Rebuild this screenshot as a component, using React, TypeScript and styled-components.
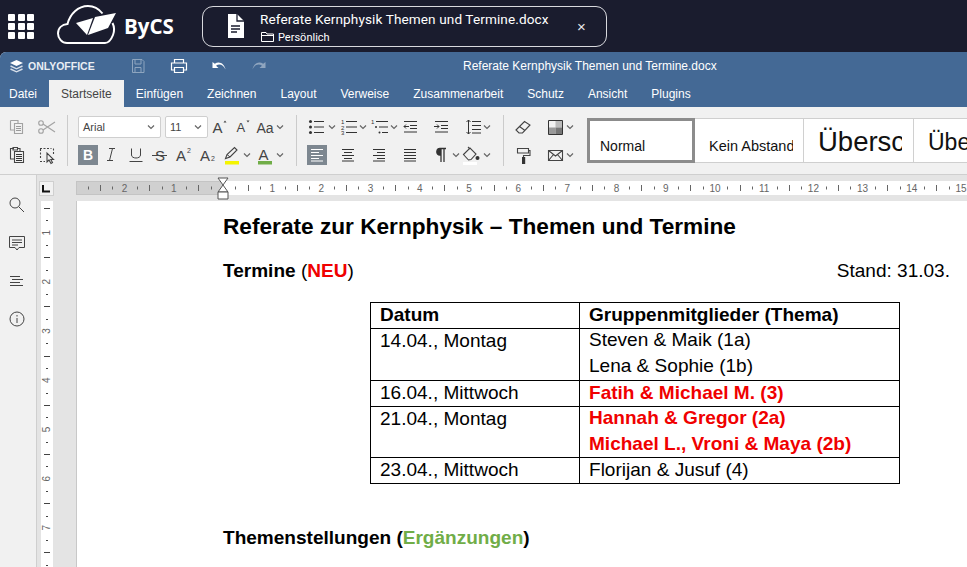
import React from "react";
import styled, { createGlobalStyle } from "styled-components";

const Global = createGlobalStyle`
  html, body { margin: 0; padding: 0; width: 967px; height: 567px; overflow: hidden; background: #fff; }
  body { font-family: "Liberation Sans", Arial, sans-serif; color: #000; }
  #root { width: 967px; height: 567px; overflow: hidden; }
`;

const Shell = styled.div`
  width: 967px; height: 567px; display: flex; flex-direction: column; background: #1a1c2e; overflow: hidden;
`;
const TopBar = styled.header`
  height: 52px; flex: none; display: flex; align-items: center; padding-left: 8px; color: #fff;
`;
const AppsGrid = styled.div`
  width: 26px; height: 25px; display: grid; grid-template-columns: repeat(3, 7px); grid-auto-rows: 7px; gap: 2px 2.5px;
  span { background: #fff; border-radius: 1px; }
`;
const LogoWrap = styled.div`
  margin-left: 23px; width: 117px; display: flex; align-items: center;
`;
const LogoText = styled.span`
  font-family: "Open Sans", sans-serif; font-weight: 700; font-size: 20.5px; margin-left: 5px; letter-spacing: 0;
`;
const FilePill = styled.div`
  margin-left: 28px; width: 405px; height: 41px; box-sizing: border-box; border: 1px solid #d8d9de; border-radius: 11px;
  display: flex; align-items: center; padding-left: 24px;
`;
const FileText = styled.div`
  margin-left: 16px; width: 317px; padding-top: 2px; display: flex; flex-direction: column; font-family: Roboto, sans-serif;
`;
const FileName = styled.div` font-size: 13.6px; line-height: 18px; letter-spacing: 0.1px; white-space: nowrap; `;
const FileLoc = styled.div`
  font-size: 11px; line-height: 15px; margin-top: 2px; display: flex; align-items: center; gap: 4px; padding-left: 1px;
`;
const Close = styled.div` font-size: 15px; line-height: 17px; font-family: "Liberation Sans", sans-serif; font-weight: 400; color: #e8e8ec; `;

const Editor = styled.div`
  flex: 1; min-height: 0; display: flex; flex-direction: column; background: #f1f1f1; border-radius: 6px 0 0 0; overflow: hidden;
`;
const TitleBar = styled.div`
  height: 28px; flex: none; background: #446995; color: #fff; display: flex; align-items: center; padding-left: 9px;
`;
const Brand = styled.div`
  display: flex; align-items: center; gap: 4px; font-size: 10.5px; font-weight: 700; width: 120px; color: #e9eef4;
`;
const HeadIcon = styled.div<{ $w: number; $dim?: boolean; $ml?: number }>`
  width: ${p => p.$w}px; margin-left: ${p => p.$ml ?? 0}px; display: flex; justify-content: center; opacity: ${p => (p.$dim ? 0.4 : 1)};
`;
const DocTitle = styled.div` font-size: 12px; margin-left: 195px; white-space: nowrap; `;
const Tabs = styled.nav`
  height: 27px; flex: none; background: #446995; display: flex; padding-left: 9px; color: #fff; font-size: 12px;
`;
const Tab = styled.div<{ $active?: boolean; $first?: boolean }>`
  padding: 0 12px; padding-left: ${p => (p.$first ? 0 : 12)}px; line-height: 28px;
  background: ${p => (p.$active ? "#f1f1f1" : "transparent")}; color: ${p => (p.$active ? "#444" : "#fff")};
`;
const Toolbar = styled.div`
  height: 68px; flex: none; background: #f1f1f1; border-bottom: 1px solid #cfcfcf; box-sizing: border-box; display: flex; overflow: hidden;
`;
const Group = styled.div<{ $w: number; $pl: number; $line?: boolean }>`
  flex: none; width: ${p => p.$w}px; box-sizing: border-box; padding-left: ${p => p.$pl}px; height: 51px; margin-top: 8px;
  border-right: ${p => (p.$line ? "1px solid #cbcbcb" : "0")}; display: flex; flex-direction: column; justify-content: space-between;
`;
const ToolRow = styled.div` display: flex; height: 22px; align-items: center; margin-top: 1px; `;
const Tool = styled.div<{ $w?: number; $ml?: number; $on?: boolean; $dim?: boolean }>`
  flex: none; width: ${p => p.$w ?? 20}px; height: 20px; margin-left: ${p => p.$ml ?? 0}px; display: flex; align-items: center; justify-content: center;
  background: ${p => (p.$on ? "#7d8790" : "transparent")}; color: ${p => (p.$on ? "#fff" : "#444")}; opacity: ${p => (p.$dim ? 0.45 : 1)};
`;
const Combo = styled.div<{ $w: number; $ml?: number }>`
  flex: none; width: ${p => p.$w}px; margin-left: ${p => p.$ml ?? 0}px; height: 22px; box-sizing: border-box; background: #fff; border: 1px solid #cfcfcf; border-radius: 2px;
  display: flex; align-items: center; justify-content: space-between; padding: 0 4px; font-size: 11px; color: #444;
`;
const Gallery = styled.div`
  margin: 11px 0 0 0; height: 45px; display: flex; flex: none; background: #fff; border-top: 1px solid #cfcfcf; border-bottom: 1px solid #cfcfcf; box-sizing: border-box;
`;
const StyleCell = styled.div<{ $w: number; $sel?: boolean; $size: number; $pl: number; $pb: number; $lh: number }>`
  flex: none; width: ${p => p.$w}px; box-sizing: border-box; overflow: hidden; white-space: nowrap; color: #111;
  border: ${p => (p.$sel ? "3px solid #8c8c8c" : "0")}; margin: ${p => (p.$sel ? "-1px 0" : "0")}; border-right: ${p => (p.$sel ? "3px solid #8c8c8c" : "1px solid #d0d0d0")};
  padding-left: ${p => p.$pl}px; font-size: ${p => p.$size}px; display: flex; align-items: flex-end;
  padding-bottom: ${p => p.$pb}px; line-height: ${p => p.$lh}px;
`;
const StyleClip = styled.span<{ $w: number }>` display: block; width: ${p => p.$w}px; overflow: hidden; `;
const Work = styled.div` flex: 1; min-height: 0; display: flex; `;
const SideBar = styled.aside`
  width: 37px; flex: none; box-sizing: border-box; border-right: 1px solid #cfcfcf; background: #f1f1f1; display: flex; flex-direction: column; align-items: center; padding-top: 20px; gap: 18px; padding-right: 3px;
`;
const SideIcon = styled.div` width: 20px; height: 20px; display: flex; align-items: center; justify-content: center; `;
const Stage = styled.div` flex: 1; min-width: 0; display: flex; flex-direction: column; background: #e4e4e4; `;
const RulerRow = styled.div` height: 26px; flex: none; display: flex; align-items: flex-start; `;
const CornerBox = styled.div`
  width: 15px; height: 15px; margin: 6px 0 0 2px; box-sizing: border-box; border: 1px solid #cfcfcf; background: #f1f1f1; display: flex; align-items: center; justify-content: center;
`;
const HRuler = styled.div` margin: 6px 0 0 22px; width: 891px; height: 14px; flex: none; `;
const Body = styled.div` flex: 1; min-height: 0; display: flex; `;
const VRuler = styled.div` margin-left: 4px; width: 12px; flex: none; background: #fff; overflow: hidden; `;
const Page = styled.main`
  margin-left: 23px; flex: 1; background: #fff; border-left: 1px solid #c8c8c8; padding: 11px 17px 0 146px; overflow: hidden;
`;
const DocH1 = styled.h1` margin: 0; font-size: 22.65px; line-height: 28px; font-weight: 700; white-space: nowrap; `;
const DocLine = styled.div<{ $mt: number }>`
  margin-top: ${p => p.$mt}px; display: flex; justify-content: space-between; font-size: 19.05px; line-height: 26px; white-space: nowrap;
`;
const Strong = styled.b``;
const Red = styled.b` color: #f00000; `;
const Green = styled.b` color: #70ad47; `;
const Table = styled.table`
  border-collapse: collapse; margin: 18px 0 0 147px; font-size: 19.05px; table-layout: fixed; width: 530px;
  td, th { border: 1px solid #000; padding: 0 9px 2px; line-height: 23px; text-align: left; vertical-align: top; white-space: nowrap; font-weight: 400; }
  th { font-weight: 700; padding-bottom: 1px; line-height: 24px; }
`;
const Col1 = styled.col` width: 209px; `;
const TwoLines = styled.div` line-height: 26px; margin: -2px 0 -1.5px; `;

const stroke = { fill: "none", stroke: "currentColor", strokeWidth: 1.1 } as const;
const I = ({ children, w = 20, h = 20 }: { children: React.ReactNode; w?: number; h?: number }) => (
  <svg width={w} height={h} viewBox={`0 0 ${w} ${h}`} style={{ display: "block" }}>{children}</svg>
);
const Chev = () => (
  <svg width="10" height="10" viewBox="0 0 10 10"><path d="M2 3.5 5 6.5 8 3.5" fill="none" stroke="#666" strokeWidth={1.2} /></svg>
);
const Lines = ({ x, ys, w }: { x: number[]; ys: number[]; w: number[] }) => (
  <>{ys.map((y, i) => <path key={i} d={`M${x[i % x.length]} ${y + 0.5}h${w[i % w.length]}`} stroke="#333" fill="none" />)}</>
);
const font = "Liberation Sans, sans-serif";

const hTicks: React.ReactNode[] = [];
for (let i = -12; i <= 62; i++) {
  const x = 147 + i * 12.3;
  if (x < 0 || x > 891) continue;
  const m = ((i % 4) + 4) % 4;
  if (m === 0) {
    if (i === 0) continue;
    const n = Math.abs(i / 4);
    hTicks.push(<text key={i} x={x} y={11} fontSize="10" fill="#666" textAnchor="middle" fontFamily={font}>{n}</text>);
  } else {
    hTicks.push(<line key={i} x1={Math.round(x) + 0.5} x2={Math.round(x) + 0.5} y1={m === 2 ? 4 : 5.5} y2={m === 2 ? 10 : 8.5} stroke="#666" />);
  }
}
const vTicks: React.ReactNode[] = [];
for (let i = 0; i < 30; i++) {
  const y = 7 + i * 12.3;
  const m = i % 4;
  if (m === 2) {
    vTicks.push(<text key={i} x={0} y={0} fontSize="10" fill="#666" textAnchor="middle" fontFamily={font} transform={`translate(9 ${y}) rotate(-90)`}>{(i + 2) / 4}</text>);
  } else {
    vTicks.push(<line key={i} x1={m === 0 ? 3 : 5} x2={m === 0 ? 9 : 7} y1={Math.round(y) + 0.5} y2={Math.round(y) + 0.5} stroke="#444" />);
  }
}

export default function App() {
  return (
    <Shell>
      <Global />
      <TopBar>
        <AppsGrid>{Array.from({ length: 9 }).map((_, i) => <span key={i} />)}</AppsGrid>
        <LogoWrap>
          <svg width="62" height="42" viewBox="57 5 62 42" style={{ flex: "none" }}>
            <path d="M105 43H67C62 43 58 38.500 58 33.500C58 28 62 24.500 67.500 24C70 14 78 6 88 6C94 6 99 9 102.500 13.500M112.500 23C114.500 27 114.500 31 113 35C111 40 108 43 105 43" fill="none" stroke="#fff" strokeWidth="2" />
            <path d="M76 23 93 18 87 35Z" fill="#fff" />
            <path d="M95 17 116 13 108 28 88 35Z" fill="#fff" />
          </svg>
          <LogoText>ByCS</LogoText>
        </LogoWrap>
        <FilePill>
          <svg width="17" height="24" viewBox="0 0 17 24">
            <path d="M1 0H10L17 7V24H1Z" fill="#fff" />
            <path d="M10 0V7H17" fill="none" stroke="#1a1c2e" strokeWidth="1.300" />
            <path d="M4 12h9M4 15h9M4 18h6" stroke="#1a1c2e" strokeWidth="1.300" />
          </svg>
          <FileText>
            <FileName>Referate Kernphysik Themen und Termine.docx</FileName>
            <FileLoc>
              <svg width="13" height="12" viewBox="0 0 13 12"><path d="M.5 10.500V1.500H5L6 3h6.500v7.500ZM.5 4.500h12" fill="none" stroke="#fff" /></svg>
              Persönlich
            </FileLoc>
          </FileText>
          <Close>×</Close>
        </FilePill>
      </TopBar>
      <Editor>
        <TitleBar>
          <Brand>
            <svg width="15" height="15" viewBox="0 0 15 15">
              <path d="M7.500 1 14 4 7.500 7 1 4Z" fill="#fff" />
              <path d="M1.500 7 7.500 9.800 13.500 7M1.500 10 7.500 12.800 13.500 10" fill="none" stroke="#d5dde8" strokeWidth="1.400" />
            </svg>
            ONLYOFFICE
          </Brand>
          <HeadIcon $w={18} $dim>
            <svg width="16" height="16" viewBox="0 0 16 16"><path d="M2.500 1.500H12L14 3.500V14.500H2.500ZM5 1.500V6H11V1.500M5 14.500V9.500H11V14.500" fill="none" stroke="#fff" /></svg>
          </HeadIcon>
          <HeadIcon $w={18} $ml={23}>
            <svg width="18" height="16" viewBox="0 0 18 16"><path d="M4.500 5V1.500H13.500V5M4.500 12H1.500V5H16.500V12H13.500M4.500 9.500H13.500V14.500H4.500Z" fill="none" stroke="#fff" strokeWidth="1.200" /></svg>
          </HeadIcon>
          <HeadIcon $w={18} $ml={22}>
            <svg width="16" height="12" viewBox="0 0 16 12"><path d="M1.500 2V8H7.500L5 5.800C8 3.500 12 4 14.500 9.500 13.500 3.500 8 .5 3.800 3.800Z" fill="#fff" /></svg>
          </HeadIcon>
          <HeadIcon $w={18} $dim $ml={22}>
            <svg width="16" height="12" viewBox="0 0 16 12"><path d="M14.500 2V8H8.500L11 5.800C8 3.500 4 4 1.500 9.500 2.500 3.500 8 .5 12.200 3.800Z" fill="#fff" /></svg>
          </HeadIcon>
          <DocTitle>Referate Kernphysik Themen und Termine.docx</DocTitle>
        </TitleBar>
        <Tabs>
          <Tab $first>Datei</Tab>
          <Tab $active>Startseite</Tab>
          <Tab>Einfügen</Tab>
          <Tab>Zeichnen</Tab>
          <Tab>Layout</Tab>
          <Tab>Verweise</Tab>
          <Tab>Zusammenarbeit</Tab>
          <Tab>Schutz</Tab>
          <Tab>Ansicht</Tab>
          <Tab>Plugins</Tab>
        </Tabs>
        <Toolbar>
          <Group $w={68} $pl={7} $line>
            <ToolRow>
              <Tool $dim><I><path d="M3.500 3.500H11V6M3.500 3.500V13H7M7.500 6.500H15.500V16.500H7.500Z" {...stroke} /><Lines x={[9]} ys={[9, 11, 13]} w={[5]} /></I></Tool>
              <Tool $ml={10} $dim><I><circle cx="4" cy="6" r="2.300" {...stroke} /><circle cx="4" cy="14" r="2.300" {...stroke} /><path d="M6 7 18 15M6 13 18 5" {...stroke} /></I></Tool>
            </ToolRow>
            <ToolRow>
              <Tool><I><path d="M7 3.500H3.500V14H7M11 3.500H13V6M6 2.500H10.500V5H6Z" {...stroke} /><path d="M7.500 6.500H16.500V17.500H7.500Z" {...stroke} /><Lines x={[9]} ys={[9, 11, 13, 15]} w={[6]} /></I></Tool>
              <Tool $ml={10}><I><path d="M3 3.500h11.500M3.500 4v10M3 16.500h5M16.500 3.500v6" {...stroke} strokeDasharray="2 1.500" /><path d="M10 8V17L12 15 14 18.500 15.500 17.500 13.800 14.500H16.500Z" {...stroke} /></I></Tool>
            </ToolRow>
          </Group>
          <Group $w={229} $pl={10} $line>
            <ToolRow>
              <Combo $w={83}>Arial<Chev /></Combo>
              <Combo $w={43} $ml={4}>11<Chev /></Combo>
              <Tool $ml={2}><I><text x="2.500" y="15.500" fontSize="15" fill="#444" fontFamily={font}>A</text><path d="M13.500 5.500 15 3.500 16.500 5.500Z" fill="#444" /></I></Tool>
              <Tool $ml={3}><I><text x="3.500" y="15" fontSize="13" fill="#444" fontFamily={font}>A</text><path d="M13.500 3.500 15 5.500 16.500 3.500Z" fill="#444" /></I></Tool>
              <Tool $ml={2}><I><text x="1.500" y="15.500" fontSize="14" fill="#444" fontFamily={font}>Aa</text></I></Tool>
              <Tool $w={10}><Chev /></Tool>
            </ToolRow>
            <ToolRow>
              <Tool $on><I><text x="5" y="15" fontSize="14" fontWeight="700" fill="#fff" fontFamily={font}>B</text></I></Tool>
              <Tool $ml={3}><I><path d="M8 3.500H14M6 15.500H12M11.500 3.500 8.500 15.500" stroke="#444" fill="none" /></I></Tool>
              <Tool $ml={5}><I><path d="M5.500 3.500V10C5.500 14 14.500 14 14.500 10V3.500" stroke="#444" fill="none" /><path d="M3.500 16.500h13" stroke="#444" /></I></Tool>
              <Tool $ml={4}><I><text x="5" y="15.500" fontSize="15" fill="#444" fontFamily={font}>S</text><path d="M2 10.500h15" stroke="#444" /></I></Tool>
              <Tool $ml={4}><I><text x="2" y="15.500" fontSize="15" fill="#444" fontFamily={font}>A</text><text x="13" y="8" fontSize="7" fill="#444" fontFamily={font}>2</text></I></Tool>
              <Tool $ml={4}><I><text x="2" y="15.500" fontSize="15" fill="#444" fontFamily={font}>A</text><text x="13" y="16" fontSize="7" fill="#444" fontFamily={font}>2</text></I></Tool>
              <Tool $ml={4}><I><path d="M3.500 13.500 5 9.500 12.500 2.500 15 5 8 12Z" fill="none" stroke="#444" strokeWidth={1.100} /><path d="M5 9.500 8 12" stroke="#444" /><rect x="3" y="16" width="14" height="3.500" fill="#f4f400" /></I></Tool>
              <Tool $w={10}><Chev /></Tool>
              <Tool $ml={3}><I><text x="3.500" y="14.500" fontSize="15" fill="#444" fontFamily={font}>A</text><rect x="3" y="16" width="14" height="3.500" fill="#70ad47" /></I></Tool>
              <Tool $w={10}><Chev /></Tool>
            </ToolRow>
          </Group>
          <Group $w={207} $pl={10} $line>
            <ToolRow>
              <Tool><I><circle cx="3.500" cy="4.500" r="1.500" fill="#333" /><circle cx="3.500" cy="10" r="1.500" fill="#333" /><circle cx="3.500" cy="15.500" r="1.500" fill="#333" /><Lines x={[7]} ys={[4, 9.500, 15]} w={[10]} /></I></Tool>
              <Tool $w={10}><Chev /></Tool>
              <Tool $ml={3} $w={18}><I w={18}><text x="1" y="7" fontSize="6" fill="#333" fontFamily={font}>1</text><text x="1" y="12.500" fontSize="6" fill="#333" fontFamily={font}>2</text><text x="1" y="18" fontSize="6" fill="#333" fontFamily={font}>3</text><Lines x={[6]} ys={[4, 9.500, 15]} w={[11]} /></I></Tool>
              <Tool $w={10}><Chev /></Tool>
              <Tool $ml={2}><I><text x="1" y="7" fontSize="6" fill="#333" fontFamily={font}>1</text><circle cx="6" cy="10" r="1" fill="#333" /><circle cx="9.500" cy="15.500" r="1" fill="#333" /><Lines x={[6, 9, 12]} ys={[4, 9.500, 15]} w={[12, 9, 6]} /></I></Tool>
              <Tool $w={10} $ml={-1}><Chev /></Tool>
              <Tool $ml={1}><I><Lines x={[4, 10, 10, 4]} ys={[4, 8, 11, 14.500]} w={[13, 7, 7, 13]} /><path d="M9 9.500H4M6 7.500 4 9.500 6 11.500" fill="none" stroke="#333" /></I></Tool>
              <Tool $ml={11}><I><Lines x={[4, 10, 10, 4]} ys={[4, 8, 11, 14.500]} w={[13, 7, 7, 13]} /><path d="M3 9.500H8M6 7.500 8 9.500 6 11.500" fill="none" stroke="#333" /></I></Tool>
              <Tool $ml={12}><I><path d="M5.500 3V17M3.500 5 5.500 3 7.500 5M3.500 15 5.500 17 7.500 15" fill="none" stroke="#333" /><Lines x={[9]} ys={[4, 8, 12, 15.500]} w={[9]} /></I></Tool>
              <Tool $w={10} $ml={-1}><Chev /></Tool>
            </ToolRow>
            <ToolRow>
              <Tool $on><svg width="20" height="20" viewBox="0 0 20 20"><path d="M4 4.500h12M4 7.500h8M4 10.500h12M4 13.500h8M4 16h12" stroke="#fff" /></svg></Tool>
              <Tool $ml={11}><I><Lines x={[4, 6]} ys={[4, 7, 10, 13, 15.500]} w={[12, 8]} /></I></Tool>
              <Tool $ml={11}><I><Lines x={[4, 8]} ys={[4, 7, 10, 13, 15.500]} w={[12, 8]} /></I></Tool>
              <Tool $ml={11}><I><Lines x={[4]} ys={[4, 7, 10, 13, 15.500]} w={[12]} /></I></Tool>
              <Tool $ml={11}><I><path d="M9 3.500H15M9 3.500C5 3.500 4.500 10 9 10V3.500ZM10 4V17M13 4V17" fill="#333" stroke="#333" strokeWidth="1.300" /></I></Tool>
              <Tool $w={10}><Chev /></Tool>
              <Tool><I><path d="M2.500 9.500 9 3 15 9 10 14.500 7.500 15Z" {...stroke} /><path d="M7 2 9 4" {...stroke} /><circle cx="16.500" cy="13" r="2" fill="#333" /><rect x="2" y="17" width="14" height="3" fill="#fff" /></I></Tool>
              <Tool $w={10} $ml={1}><Chev /></Tool>
            </ToolRow>
          </Group>
          <Group $w={83} $pl={9}>
            <ToolRow>
              <Tool><I><path d="M3 13 11.500 4.500 17 8 9.500 16H6ZM6.500 9.500 12 13.500" {...stroke} /></I></Tool>
              <Tool $ml={12}><I><path d="M3.500 3.500H17.500V17.500H3.500Z" fill="none" stroke="#333" /><rect x="4" y="10.500" width="6.500" height="6.500" fill="#999" /><rect x="10.500" y="4" width="6.500" height="6.500" fill="#bbb" /><rect x="10.500" y="10.500" width="6.500" height="6.500" fill="#777" /></I></Tool>
              <Tool $w={10}><Chev /></Tool>
            </ToolRow>
            <ToolRow>
              <Tool><I><path d="M4.500 3.500H15.500V8H4.500ZM15.500 5.500H17V10.500H10.500V12.500" {...stroke} /><rect x="9" y="12" width="3.200" height="7" fill="#333" /></I></Tool>
              <Tool $ml={12}><I><path d="M3.500 5.500H17.500V15.500H3.500ZM3.500 5.500 10.500 11 17.500 5.500M3.500 15.500 8.500 9.500M17.500 15.500 12.500 9.500" {...stroke} /></I></Tool>
              <Tool $w={10}><Chev /></Tool>
            </ToolRow>
          </Group>
          <Gallery>
            <StyleCell $w={108} $sel $size={14} $pl={10} $pb={2} $lh={24}>Normal</StyleCell>
            <StyleCell $w={109} $size={14.500} $pl={14} $pb={4} $lh={24}><StyleClip $w={84}>Kein Abstand</StyleClip></StyleCell>
            <StyleCell $w={110} $size={27.500} $pl={14} $pb={1} $lh={38}><StyleClip $w={84}>Überschrift 1</StyleClip></StyleCell>
            <StyleCell $w={60} $size={23} $pl={14} $pb={1} $lh={38}>Überschrift 2</StyleCell>
          </Gallery>
        </Toolbar>
        <Work>
          <SideBar>
            <SideIcon><svg width="18" height="18" viewBox="0 0 18 18"><circle cx="7" cy="7" r="5" fill="none" stroke="#444" /><path d="M10.700 10.700 16 16" stroke="#444" /></svg></SideIcon>
            <SideIcon><svg width="18" height="18" viewBox="0 0 18 18"><path d="M1.500 2.500H16.500V13.500H11L9 16 7 13.500H1.500Z" fill="none" stroke="#444" /><path d="M4 6h10M4 8.500h10M4 11h6" stroke="#444" /></svg></SideIcon>
            <SideIcon><svg width="18" height="18" viewBox="0 0 18 18"><path d="M2 4.500h10M4 7.500h11M2 10.500h10M2 13.500h13" stroke="#444" fill="none" /></svg></SideIcon>
            <SideIcon><svg width="18" height="18" viewBox="0 0 18 18"><circle cx="9" cy="9" r="7" fill="none" stroke="#444" /><path d="M9 8V13M9 5V6.500" stroke="#444" /></svg></SideIcon>
          </SideBar>
          <Stage>
            <RulerRow>
              <CornerBox><svg width="9" height="9" viewBox="0 0 9 9"><path d="M1 1V7.500H8" fill="none" stroke="#111" strokeWidth="2" /></svg></CornerBox>
              <HRuler>
                <svg width="891" height="14" viewBox="0 0 891 14" style={{ overflow: "visible", display: "block" }}>
                  <rect x=".5" y=".5" width="147" height="13" fill="#d0d0d0" stroke="#c4c4c4" />
                  <rect x="147" y="0" width="744" height="14" fill="#fff" />
                  {hTicks}
                  <path d="M142 -3H152L147 4 152 11H142L147 4Z" fill="#fff" stroke="#555" />
                  <path d="M142 11H152V18H142Z" fill="#fff" stroke="#555" />
                </svg>
              </HRuler>
            </RulerRow>
            <Body>
              <VRuler>
                <svg width="12" height="370" viewBox="0 0 12 370" style={{ display: "block" }}>{vTicks}</svg>
              </VRuler>
              <Page>
                <DocH1>Referate zur Kernphysik – Themen und Termine</DocH1>
                <DocLine $mt={18}>
                  <span><Strong>Termine</Strong> (<Red>NEU</Red>)</span>
                  <span>Stand: 31.03.</span>
                </DocLine>
                <Table>
                  <colgroup><Col1 /><col /></colgroup>
                  <tbody>
                    <tr><th>Datum</th><th>Gruppenmitglieder (Thema)</th></tr>
                    <tr><td>14.04., Montag</td><td><TwoLines>Steven &amp; Maik (1a)<br />Lena &amp; Sophie (1b)</TwoLines></td></tr>
                    <tr><td>16.04., Mittwoch</td><td><Red>Fatih &amp; Michael M. (3)</Red></td></tr>
                    <tr><td>21.04., Montag</td><td><TwoLines><Red>Hannah &amp; Gregor (2a)</Red><br /><Red>Michael L., Vroni &amp; Maya (2b)</Red></TwoLines></td></tr>
                    <tr><td>23.04., Mittwoch</td><td>Florijan &amp; Jusuf (4)</td></tr>
                  </tbody>
                </Table>
                <DocLine $mt={41}>
                  <Strong>Themenstellungen (<Green>Ergänzungen</Green>)</Strong>
                </DocLine>
              </Page>
            </Body>
          </Stage>
        </Work>
      </Editor>
    </Shell>
  );
}
